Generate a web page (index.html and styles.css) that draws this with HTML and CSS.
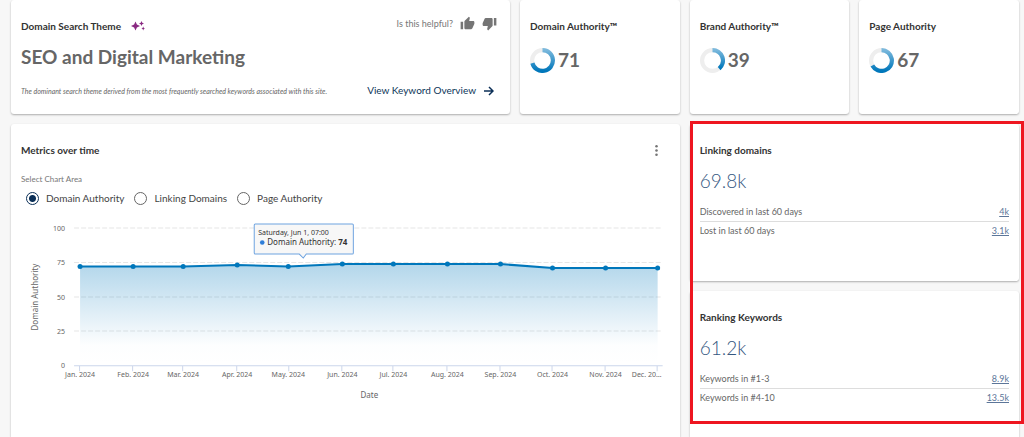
FILE: index.html
```html
<!DOCTYPE html>
<html lang="en">
<head>
<meta charset="utf-8">
<title>Domain Overview</title>
<link rel="stylesheet" href="styles.css">
</head>
<body>
<main class="dashboard">
  <section class="card theme">
    <div class="theme-head">
      <h2 class="card-title">Domain Search Theme
        <svg class="sparkle" viewBox="0 0 14 10" aria-hidden="true"><path d="M4.500 0.500 5.900 3.600 9 5 5.900 6.400 4.500 9.500 3.100 6.400 0 5 3.100 3.600Z"/><path d="M10.500 0 11.300 1.700 13 2.500 11.300 3.300 10.500 5 9.700 3.300 8 2.500 9.700 1.700Z"/><path d="M12.200 5.500 12.800 6.900 14 7.500 12.800 8.100 12.200 9.500 11.600 8.100 10.400 7.500 11.600 6.900Z"/></svg>
      </h2>
      <div class="helpful">
        <span>Is this helpful?</span>
        <button class="icon-button" aria-label="Helpful"><svg viewBox="0 0 24 24"><path d="M1 21h4V9H1v12zm22-11c0-1.100-.9-2-2-2h-6.310l.95-4.570.03-.32c0-.41-.17-.79-.44-1.060L14.170 1 7.590 7.590C7.220 7.950 7 8.450 7 9v10c0 1.100.9 2 2 2h9c.83 0 1.540-.5 1.840-1.220l3.020-7.050c.09-.23.14-.47.14-.73v-2z"/></svg></button>
        <button class="icon-button" aria-label="Not helpful"><svg viewBox="0 0 24 24"><path d="M15 3H6c-.83 0-1.540.5-1.840 1.220l-3.020 7.050c-.09.23-.14.47-.14.73v2c0 1.100.9 2 2 2h6.310l-.95 4.570-.03.32c0 .41.17.79.44 1.060L9.830 23l6.590-6.590c.36-.36.58-.86.58-1.410V5c0-1.100-.9-2-2-2zm4 0v12h4V3h-4z"/></svg></button>
      </div>
    </div>
    <p class="theme-name">SEO and Digital Marketing</p>
    <div class="theme-foot">
      <p class="theme-note">The dominant search theme derived from the most frequently searched keywords associated with this site.</p>
      <a class="overview-link" href="#keywords">View Keyword Overview
        <svg viewBox="0 0 10 10" aria-hidden="true"><path d="M0 5H9M5 1 9 5 5 9"/></svg>
      </a>
    </div>
  </section>

  <section class="card score">
    <h2 class="card-title">Domain Authority™</h2>
    <div class="score-row">
      <svg class="ring" viewBox="1 1 24 24" aria-hidden="true">
        <defs><linearGradient id="blue" x1="0" y1="0" x2="0" y2="1"><stop offset="0" stop-color="#7ab8dc"/><stop offset="1" stop-color="#0077bb"/></linearGradient></defs>
        <circle class="ring-track" cx="13" cy="13" r="10"/><path class="ring-value" d="M13 3A10 10 0 1 1 3.300 15.500"/>
      </svg>
      <span class="score-value">71</span>
    </div>
  </section>
  <section class="card score">
    <h2 class="card-title">Brand Authority™</h2>
    <div class="score-row">
      <svg class="ring" viewBox="1 1 24 24" aria-hidden="true"><circle class="ring-track" cx="13" cy="13" r="10"/><path class="ring-value" d="M13 3A10 10 0 0 1 19.400 20.700"/></svg>
      <span class="score-value">39</span>
    </div>
  </section>
  <section class="card score">
    <h2 class="card-title">Page Authority</h2>
    <div class="score-row">
      <svg class="ring" viewBox="1 1 24 24" aria-hidden="true"><circle class="ring-track" cx="13" cy="13" r="10"/><path class="ring-value" d="M13 3A10 10 0 1 1 4.200 17.800"/></svg>
      <span class="score-value">67</span>
    </div>
  </section>

  <section class="card metrics">
    <div class="metrics-head">
      <h2 class="card-title">Metrics over time</h2>
      <button class="icon-button menu" aria-label="Chart menu"><svg viewBox="0 0 14 14"><circle cx="7" cy="3" r="1.200"/><circle cx="7" cy="7" r="1.200"/><circle cx="7" cy="11" r="1.200"/></svg></button>
    </div>
    <fieldset class="areas">
      <legend>Select Chart Area</legend>
      <label><input type="radio" name="area" checked>Domain Authority</label>
      <label><input type="radio" name="area">Linking Domains</label>
      <label><input type="radio" name="area">Page Authority</label>
    </fieldset>
    <svg class="chart" viewBox="0 0 648 190" role="img" aria-label="Domain Authority by month">
      <defs><linearGradient id="fade" x1="0" y1="0" x2="0" y2="1"><stop offset="0" stop-color="#0077bb" stop-opacity="0.300"/><stop offset="0.800" stop-color="#0077bb" stop-opacity="0.010"/><stop offset="1" stop-color="#0077bb" stop-opacity="0"/></linearGradient></defs>
      <path class="grid" d="M53 10H641M53 44.500H641M53 79H641M53 113H641"/>
      <path class="axis" d="M53 147.500H641M58.500 147V153M111.500 147V153M161.500 147V153M215.500 147V153M267.500 147V153M320.500 147V153M371.500 147V153M425.500 147V153M478.500 147V153M530.500 147V153M583.500 147V153M635.500 147V153"/>
      <path class="area" d="M59 48.500 112 48.500 162 48.500 216 47 267 48.500 321 46 372 46 426 46 479 46 531 50 584 50 636 50V147H59Z"/>
      <path class="line" d="M59 48.500 112 48.500 162 48.500 216 47 267 48.500 321 46 372 46 426 46 479 46 531 50 584 50 636 50"/>
      <g class="dots"><circle cx="59" cy="48.500" r="2.500"/><circle cx="112" cy="48.500" r="2.500"/><circle cx="162" cy="48.500" r="2.500"/><circle cx="216" cy="47" r="2.500"/><circle cx="267" cy="48.500" r="2.500"/><circle cx="321" cy="46" r="2.500"/><circle cx="372" cy="46" r="2.500"/><circle cx="426" cy="46" r="2.500"/><circle cx="479" cy="46" r="2.500"/><circle cx="531" cy="50" r="2.500"/><circle cx="584" cy="50" r="2.500"/><circle cx="636" cy="50" r="2.500"/></g>
      <g class="y-labels"><text x="44" y="13">100</text><text x="44" y="47">75</text><text x="44" y="82">50</text><text x="44" y="116">25</text><text x="44" y="150">0</text></g>
      <g class="x-labels"><text x="59" y="159">Jan. 2024</text><text x="112" y="159">Feb. 2024</text><text x="162" y="159">Mar. 2024</text><text x="216" y="159">Apr. 2024</text><text x="267" y="159">May. 2024</text><text x="321" y="159">Jun. 2024</text><text x="372" y="159">Jul. 2024</text><text x="426" y="159">Aug. 2024</text><text x="479" y="159">Sep. 2024</text><text x="531" y="159">Oct. 2024</text><text x="584" y="159">Nov. 2024</text><text x="625" y="159">Dec. 20…</text></g>
      <text class="axis-title" x="348" y="180">Date</text>
      <text class="axis-title" transform="translate(17 79) rotate(-90)">Domain Authority</text>
      <g class="tooltip">
        <path class="tip-box" d="M234 6H331Q332 6 332 7V35Q332 36 331 36H285L282 40 278 36H234Q233 36 233 35V7Q233 6 234 6Z"/>
        <text class="tip-date" x="237" y="17">Saturday, Jun 1, 07:00</text>
        <circle class="tip-dot" cx="241" cy="24.500" r="2.300"/>
        <text class="tip-text" x="246" y="27">Domain Authority: <tspan class="tip-value">74</tspan></text>
      </g>
    </svg>
  </section>

  <div class="side">
    <section class="card stat">
      <h2 class="card-title">Linking domains</h2>
      <p class="stat-value">69.8k</p>
      <dl class="stat-list">
        <div><dt>Discovered in last 60 days</dt><dd><a href="#discovered">4k</a></dd></div>
        <div><dt>Lost in last 60 days</dt><dd><a href="#lost">3.1k</a></dd></div>
      </dl>
    </section>
    <section class="card stat">
      <h2 class="card-title">Ranking Keywords</h2>
      <p class="stat-value">61.2k</p>
      <dl class="stat-list">
        <div><dt>Keywords in #1-3</dt><dd><a href="#top3">8.9k</a></dd></div>
        <div><dt>Keywords in #4-10</dt><dd><a href="#top10">13.5k</a></dd></div>
      </dl>
    </section>
    <div class="highlight" aria-hidden="true"></div>
  </div>
</main>
</body>
</html>
```
FILE: styles.css
```css
* { box-sizing: border-box; }
body {
  margin: 0;
  background: #f7f7f7;
  color: #666;
  font-family: Lato, "Liberation Sans", sans-serif;
  font-size: 9px;
  line-height: 12px;
}
h2, p, dl, dd { margin: 0; }
.dashboard {
  display: grid;
  grid-template-columns: repeat(6, minmax(0, 1fr));
  grid-template-rows: auto 1fr;
  gap: 10px;
  min-height: 100vh;
  padding: 0 5px 0 11px;
}
.card {
  padding: 19px 10px 10px;
  background: #fff;
  border-radius: 3px;
  box-shadow: 0 1px 2px rgba(0, 0, 0, 0.3);
}
.card-title {
  color: #333;
  font-size: 10px;
  font-weight: 700;
  line-height: 14px;
}
.icon-button {
  display: flex;
  padding: 0;
  border: 0;
  background: none;
}
.icon-button svg { width: 15px; height: 15px; fill: #757575; }

.theme { grid-column: span 3; padding-bottom: 16px; }
.theme-head { display: flex; justify-content: space-between; align-items: flex-start; height: 26px; }
.sparkle { width: 14px; height: 10px; margin-left: 8px; fill: #8a2a82; vertical-align: -1px; }
.helpful { display: flex; align-items: center; gap: 7px; margin: -3px 3px 0 0; color: #777; }
.theme-name { font-size: 19px; font-weight: 700; line-height: 24px; }
.theme-foot { display: flex; justify-content: space-between; align-items: center; margin-top: 14px; padding-right: 6px; }
.theme-note { font-size: 7px; font-style: italic; }
.overview-link { display: flex; align-items: center; gap: 8px; color: #0b3558; font-size: 10px; line-height: 15px; text-decoration: none; }
.overview-link svg { width: 10px; height: 10px; fill: none; stroke: #0b2f57; stroke-width: 1.5; }

.score-row { display: flex; align-items: center; gap: 3px; margin-top: 14px; }
.ring { width: 25px; height: 25px; fill: none; stroke-width: 4; }
.ring-track { stroke: #eee; }
.ring-value { stroke: url(#blue); }
.score-value { font-size: 19px; font-weight: 700; line-height: 26px; }

.metrics { grid-column: span 4; }
.metrics, .stat:nth-child(2) { border-radius: 3px 3px 0 0; }
.metrics-head { display: flex; justify-content: space-between; }
.menu { margin-right: 6px; }
.areas { display: flex; gap: 10px; margin: 16px 0 0; padding: 7px 5px 0; border: 0; }
.areas legend { margin-left: -5px; padding: 0; color: #777; font-size: 8px; line-height: 10px; }
.areas label { display: flex; align-items: center; gap: 7px; color: #444; font-size: 10px; line-height: 14px; }
.areas input { appearance: none; width: 13px; height: 13px; margin: 0; border: 1px solid #666; border-radius: 50%; }
.areas input:checked { border-color: #0b2f57; background: radial-gradient(circle, #0b2f57 3px, #fff 4px); }

.chart { display: block; width: 100%; margin-top: 13px; font-family: "Noto Sans", "DejaVu Sans", sans-serif; font-size: 7px; fill: #666; }
.grid { fill: none; stroke: #e6e6e6; stroke-dasharray: 5 2; }
.axis { fill: none; stroke: #ccd6eb; }
.area { fill: url(#fade); }
.line { fill: none; stroke: #0077bb; stroke-width: 2; }
.dots { fill: #0077bb; }
.y-labels { text-anchor: end; }
.x-labels, .axis-title { text-anchor: middle; }
.axis-title { font-size: 8px; }
.tip-box { fill: #f7f7f7; stroke: #6fa4e0; }
.tip-date { font-size: 7px; fill: #333; }
.tip-text { font-size: 8px; fill: #333; }
.tip-dot { fill: #2f7ed8; }
.tip-value { font-weight: 700; }

.side { grid-column: span 2; position: relative; display: grid; grid-template-rows: auto 1fr; gap: 10px; }
.stat:first-child { padding-bottom: 41px; }
.stat-value { margin-top: 12px; color: #34577f; font-size: 19px; font-weight: 300; line-height: 24px; }
.stat-list { margin-top: 10px; }
.stat-list div { display: flex; justify-content: space-between; padding: 3px 0; }
.stat-list div + div { border-top: 1px solid #ddd; }
.stat-list a { color: #5c7699; }
.highlight {
  position: absolute;
  inset: -3px -5px 13px 0;
  border: 3px solid #ee1620;
  pointer-events: none;
}
```
